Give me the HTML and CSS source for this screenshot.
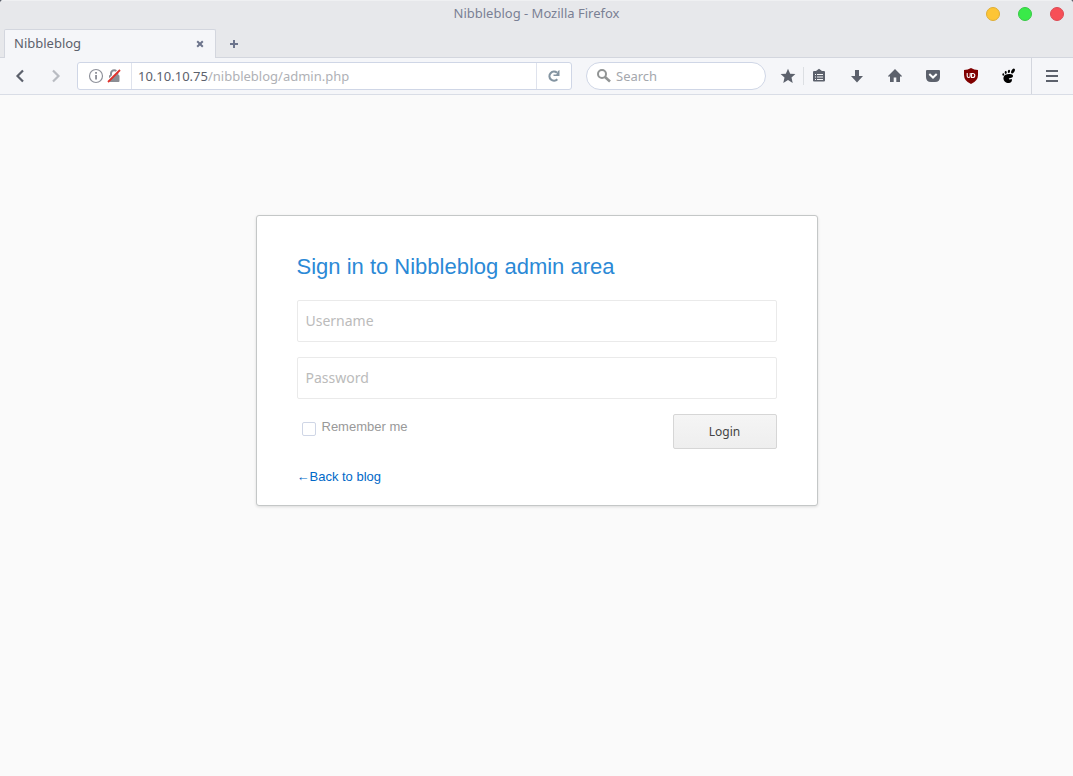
FILE: index.html
```
<!DOCTYPE html>
<html lang="en">
<head>
<meta charset="utf-8">
<title>Nibbleblog</title>
<link rel="stylesheet" href="styles.css">
</head>
<body>
<div class="window">
  <header class="titlebar">
    <div class="window-title">Nibbleblog - Mozilla Firefox</div>
    <div class="window-controls">
      <button class="dot dot-min" type="button" aria-label="Minimize"></button>
      <button class="dot dot-max" type="button" aria-label="Maximize"></button>
      <button class="dot dot-close" type="button" aria-label="Close"></button>
    </div>
  </header>
  <div class="tabs">
    <div class="tab">
      <span class="tab-label">Nibbleblog</span>
      <button class="plain" type="button" aria-label="Close tab">
        <svg width="8" height="8" viewBox="0 0 8 8"><path d="M1.2 1.2L6.800 6.800M6.800 1.200L1.200 6.800" stroke="#6c748c" stroke-width="2"/></svg>
      </button>
    </div>
    <div class="tab-rest">
      <button class="plain" type="button" aria-label="New tab">
        <svg width="8" height="8" viewBox="0 0 8 8"><path d="M4 0V8M0 4H8" stroke="#6c748c" stroke-width="2"/></svg>
      </button>
    </div>
  </div>
  <nav class="toolbar">
    <div class="history">
      <button class="plain" type="button" aria-label="Back">
        <svg width="16" height="16" viewBox="0 0 16 16"><path d="M11 2.500L5.500 8L11 13.500" fill="none" stroke="#5c616c" stroke-width="2.200"/></svg>
      </button>
      <button class="plain" type="button" aria-label="Forward">
        <svg width="16" height="16" viewBox="0 0 16 16"><path d="M5 2.500L10.500 8L5 13.500" fill="none" stroke="#b9bcc2" stroke-width="2.200"/></svg>
      </button>
    </div>
    <div class="urlbar">
      <div class="identity">
        <svg width="16" height="16" viewBox="0 0 16 16"><circle cx="8" cy="8" r="6.500" fill="none" stroke="#8f929b" stroke-width="1.200"/><path d="M7.100 4h1.900v1.800H7.100zM7.100 7H9v4.600H7.100z" fill="#8f929b"/></svg>
        <svg width="14" height="16" viewBox="0 0 14 16"><path d="M4 8V5.500A3.200 3.200 0 0 1 10.400 5.500V8" fill="none" stroke="#8b8d94" stroke-width="2"/><rect x="2" y="7" width="10.500" height="7" rx="1" fill="#8b8d94"/><path d="M.2 13.200L12 1.400" stroke="#fff" stroke-width="1.500"/><path d="M1 14L13 2" stroke="#e0302a" stroke-width="1.800"/></svg>
      </div>
      <div class="address"><span class="host">10.10.10.75</span>/nibbleblog/admin.php</div>
      <button class="plain reload" type="button" aria-label="Reload">
        <svg width="14" height="14" viewBox="0 0 14 14"><path d="M10.300 10.200A4.500 4.500 0 1 1 10 3.800" fill="none" stroke="#8394a1" stroke-width="2.200"/><path d="M12.500 1V7H6.500V5.500H9.300L11 2Z" fill="#8394a1"/></svg>
      </button>
    </div>
    <div class="search">
      <svg width="16" height="16" viewBox="0 0 16 16"><circle cx="6" cy="6" r="4" fill="none" stroke="#919494" stroke-width="2"/><path d="M9 9L14 13.500" stroke="#919494" stroke-width="2.600"/></svg>
      <input class="search-input" type="text" placeholder="Search" aria-label="Search">
    </div>
    <div class="bookmarks">
      <button class="plain" type="button" aria-label="Bookmark this page">
        <svg width="16" height="16" viewBox="0 0 16 16"><path d="M8 .8L10.200 5.700L15.400 6.100L11.500 9.600L12.700 14.900L8 12.100L3.300 14.900L4.500 9.600L.6 6.100L5.800 5.700Z" fill="#5c616c"/></svg>
      </button>
      <button class="plain lists" type="button" aria-label="Show bookmarks">
        <svg width="16" height="16" viewBox="0 0 16 16"><path d="M2 4Q2 3 3 3H5L8 .8L11 3H13Q14 3 14 4V12.500Q14 13.500 13 13.500H3Q2 13.500 2 12.500Z" fill="#5c616c"/><path d="M4 6.500H5M6 6.500H12M4 9H5M6 9H12M4 11.500H5M6 11.500H12" stroke="#f5f6f7"/></svg>
      </button>
    </div>
    <div class="tools">
      <button class="plain" type="button" aria-label="Downloads">
        <svg width="16" height="16" viewBox="0 0 16 16"><path d="M6 2H10V8H14L8 14.500L2 8H6Z" fill="#5c616c"/></svg>
      </button>
      <button class="plain" type="button" aria-label="Home">
        <svg width="16" height="16" viewBox="0 0 16 16"><path d="M8 1L15 8V8.500H13V14H9.300V9.500H6.700V14H3V8.500H1V8Z" fill="#5c616c"/></svg>
      </button>
      <button class="plain" type="button" aria-label="Pocket">
        <svg width="16" height="16" viewBox="0 0 16 16"><path d="M1 3Q1 2 2 2H14Q15 2 15 3V9Q15 14 10 14H6Q1 14 1 9Z" fill="#5c616c"/><path d="M4.300 6L8 9.500L11.700 6" fill="none" stroke="#fff" stroke-width="2"/></svg>
      </button>
      <button class="plain" type="button" aria-label="uBlock">
        <svg width="16" height="16" viewBox="0 0 16 16"><path d="M8 0Q11 2 15 2V7Q15 13 8 16Q1 13 1 7V2Q5 2 8 0Z" fill="#800000"/><path d="M4.200 5V8Q4.200 9.500 5.700 9.500T7.200 8V5M8.600 9.500V5.500H9.800Q11.800 5.500 11.800 7.500T9.800 9.500H8" fill="none" stroke="#fff" stroke-width="1.100"/></svg>
      </button>
      <button class="plain" type="button" aria-label="GNOME extensions">
        <svg width="16" height="16" viewBox="0 0 16 16"><g fill="#000"><path d="M2.500 9.500C3 6.500 7 5.700 10 6.300C13.500 7 12 10 9.500 10C7.500 10 7.500 11 8.500 11.500L10.800 11C11.500 14 9 15.500 6.500 15C4 14.500 2 12 2.500 9.500Z"/><ellipse cx="12" cy="3" rx="1.500" ry="2.700" transform="rotate(30 12 3)"/><ellipse cx="7.900" cy="3.400" rx="1.100" ry="1.700" transform="rotate(10 7.900 3.400)"/><ellipse cx="4.700" cy="4.500" rx="1" ry="1.400"/><ellipse cx="2.300" cy="6.500" rx=".9" ry="1.200"/></g></svg>
      </button>
    </div>
    <button class="plain menu" type="button" aria-label="Open menu">
      <svg width="12" height="12" viewBox="0 0 12 12"><path d="M0 1H12M0 6H12M0 11H12" stroke="#5c616c" stroke-width="2"/></svg>
    </button>
  </nav>
  <main class="page">
    <form class="card">
      <h1 class="heading">Sign in to Nibbleblog admin area</h1>
      <input class="field" type="text" placeholder="Username" aria-label="Username">
      <input class="field" type="password" placeholder="Password" aria-label="Password">
      <div class="actions">
        <label class="remember"><input class="check" type="checkbox"><span>Remember me</span></label>
        <button class="login" type="button">Login</button>
      </div>
      <a class="back" href="#">←Back to blog</a>
    </form>
  </main>
</div>
</body>
</html>
```
FILE: styles.css
```
* {
  box-sizing: border-box;
}

body {
  margin: 0;
  background: #5c616c;
  font: 13px/18px "Noto Sans", sans-serif;
  color: #5c616c;
}

svg {
  display: block;
}

.window {
  display: flex;
  flex-direction: column;
  min-height: 100vh;
  border-radius: 4px 4px 0 0;
  overflow: hidden;
  background: #fafafa;
}

.plain {
  display: flex;
  align-items: center;
  justify-content: center;
  padding: 0;
  border: 0;
  background: none;
}

.titlebar {
  display: grid;
  grid-template-columns: 1fr auto 1fr;
  align-items: center;
  height: 29px;
  padding: 0 9px 2px 0;
  border-top: 1px solid #eff0f2;
  background: #e7e8eb;
}

.window-title {
  grid-column: 2;
  padding: 0 0 2px 9px;
  color: #7a8094;
}

.window-controls {
  display: flex;
  justify-content: flex-end;
  gap: 18px;
}

.dot {
  width: 14px;
  height: 14px;
  padding: 0;
  border: 1px solid;
  border-radius: 50%;
}

.dot-min {
  background: #fdc535;
  border-color: #dfad35;
}

.dot-max {
  background: #39ea49;
  border-color: #38c846;
}

.dot-close {
  background: #f74f57;
  border-color: #dc4b54;
}

.tabs {
  display: flex;
  height: 29px;
  padding-left: 4px;
  background: linear-gradient(#d3d6de, #d3d6de) left bottom / 4px 1px no-repeat #e7e8eb;
}

.tab {
  display: flex;
  align-items: center;
  justify-content: space-between;
  width: 212px;
  padding: 0 11px 0 9px;
  border: 1px solid #d3d6de;
  border-bottom: 0;
  border-radius: 2px 2px 0 0;
  background: #f5f6f9;
}

.tab-label {
  padding-bottom: 2px;
}

.tab-rest {
  display: flex;
  flex: 1;
  padding: 2px 0 0 14px;
  border-bottom: 1px solid #d3d6de;
}

.toolbar {
  display: flex;
  align-items: center;
  height: 37px;
  border-bottom: 1px solid #d9dde6;
  background: #f5f6f9;
}

.history {
  display: flex;
  gap: 20px;
  padding: 0 13px 0 12px;
}

.urlbar {
  display: flex;
  flex: 1;
  height: 28px;
  border: 1px solid #cfd6e6;
  border-radius: 3px;
  background: #fff;
}

.identity {
  display: flex;
  align-items: center;
  gap: 3px;
  padding: 0 10px;
  border-right: 1px solid #dfe3ed;
}

.address {
  display: flex;
  flex: 1;
  align-items: center;
  padding-left: 6px;
  color: #afb1b6;
}

.host {
  color: #5c616c;
}

.reload {
  width: 35px;
  border-left: 1px solid #dfe3ed;
}

.search {
  display: flex;
  align-items: center;
  gap: 4px;
  width: 180px;
  height: 28px;
  margin-left: 14px;
  padding: 0 9px;
  border: 1px solid #cfd6e6;
  border-radius: 14px;
  background: #fff;
}

.search-input {
  flex: 1;
  min-width: 0;
  padding: 0;
  border: 0;
  outline: 0;
  background: none;
  font: inherit;
}

.search-input::placeholder {
  color: #a4a7ad;
}

.bookmarks {
  display: flex;
  padding-left: 14px;
  gap: 7px;
}

.lists {
  height: 18px;
  padding-left: 7px;
  border-left: 1px solid #dcdfe3;
}

.tools {
  display: flex;
  gap: 22px;
  padding: 0 14px 0 22px;
}

.menu {
  align-self: stretch;
  width: 42px;
  padding-right: 2px;
  border-left: 1px solid #d3d6de;
}

.page {
  flex: 1;
  padding: 120px 16px 40px;
}

.card {
  max-width: 562px;
  margin: 0 auto;
  padding: 36px 40px 19px;
  border: 1px solid #c4c7c7;
  border-radius: 3px;
  background: #fff;
  box-shadow: 0 1px 3px rgba(0, 0, 0, 0.12);
  font-family: "Liberation Sans", Arial, sans-serif;
}

.heading {
  margin: 0 0 18px;
  font-size: 22px;
  font-weight: 400;
  line-height: 30px;
  color: #2b89d6;
}

.field {
  display: block;
  width: 100%;
  height: 42px;
  margin-bottom: 15px;
  padding: 0 8px 2px;
  border: 1px solid #eaeaea;
  border-radius: 2px;
  background: #fff;
  font: 14px/20px "Noto Sans", sans-serif;
  color: #5c616c;
}

.field::placeholder {
  color: #bbb;
}

.actions {
  display: flex;
  align-items: flex-start;
  justify-content: space-between;
}

.remember {
  display: flex;
  align-items: flex-start;
  gap: 6px;
  padding: 4px 0 0 5px;
  color: #999;
}

.check {
  appearance: none;
  width: 14px;
  height: 14px;
  margin: 4px 0 0;
  border: 1px solid #cfd6e6;
  border-radius: 2px;
  background: #fff;
}

.check:checked {
  background: #2b89d6;
}

.login {
  width: 104px;
  height: 35px;
  border: 1px solid #d6d6d6;
  border-radius: 2px;
  background: linear-gradient(#f5f5f5, #eee);
  font: 12px/18px "Noto Sans", sans-serif;
  color: #444;
}

.back {
  display: inline-block;
  margin-top: 19px;
  color: #0069c8;
  text-decoration: none;
}
```
